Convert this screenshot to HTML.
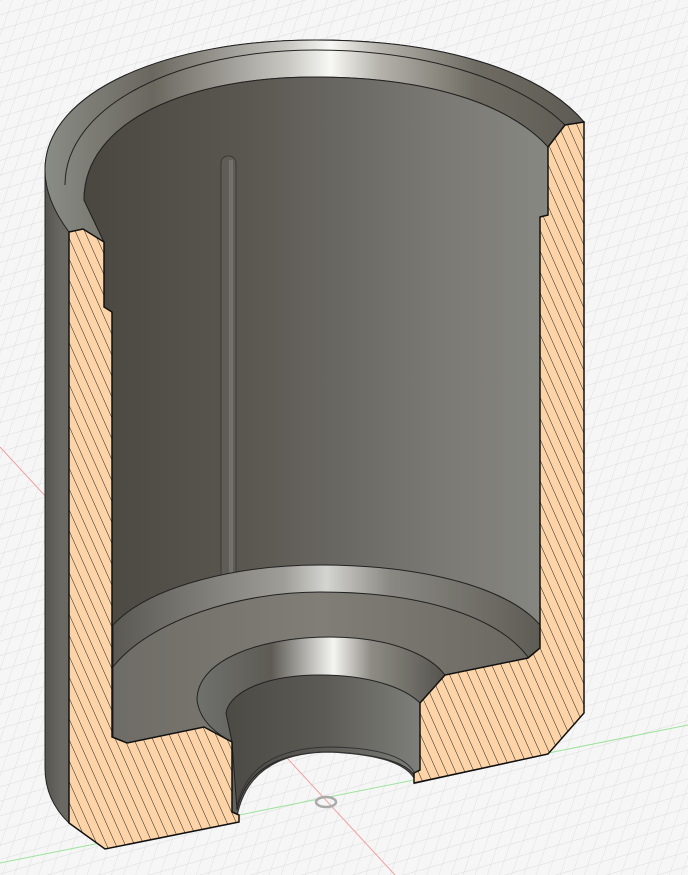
<!DOCTYPE html>
<html><head><meta charset="utf-8"><style>html,body{margin:0;padding:0;background:#f6f6f6}svg{display:block}</style></head>
<body>
<svg width="688" height="875" viewBox="0 0 688 875" xmlns="http://www.w3.org/2000/svg">
<defs>
<pattern id="g1" width="14" height="14" patternUnits="userSpaceOnUse" patternTransform="rotate(-16) skewX(-35)">
<path d="M0 0H14M0 0V14" stroke="#dcdcdc" stroke-width="1" fill="none"/>
</pattern>
<pattern id="hatch" width="8.5" height="20" patternUnits="userSpaceOnUse" patternTransform="rotate(-24)">
<rect width="8.5" height="20" fill="#fdd4a8"/>
<path d="M0 0V20" stroke="#222" stroke-width="1"/>
</pattern>
<linearGradient id="wall" x1="0" x2="1" y1="0" y2="0">
<stop offset="0" stop-color="#4a4741"/><stop offset="0.35" stop-color="#5a5751"/><stop offset="0.75" stop-color="#797873"/><stop offset="1" stop-color="#878782"/>
</linearGradient>
<linearGradient id="rim" x1="0" x2="1" y1="0" y2="0">
<stop offset="0" stop-color="#8a8c86"/><stop offset="0.2" stop-color="#6a675f"/><stop offset="0.45" stop-color="#c8c7c2"/><stop offset="0.53" stop-color="#f8f8f4"/><stop offset="0.62" stop-color="#b5b3ac"/><stop offset="0.8" stop-color="#6e6b62"/><stop offset="1" stop-color="#5e5b54"/>
</linearGradient>
<linearGradient id="outer" x1="0" x2="1" y1="0" y2="0">
<stop offset="0" stop-color="#56544f"/><stop offset="0.03" stop-color="#6a6862"/><stop offset="1" stop-color="#55534e"/>
</linearGradient>
<linearGradient id="floor" x1="0" x2="1" y1="0" y2="0">
<stop offset="0" stop-color="#6e6c66"/><stop offset="0.5" stop-color="#807e76"/><stop offset="1" stop-color="#6a6861"/>
</linearGradient>
<linearGradient id="band" x1="0" x2="1" y1="0" y2="0">
<stop offset="0" stop-color="#5a5852"/><stop offset="0.4" stop-color="#9e9d98"/><stop offset="0.5" stop-color="#d4d4d0"/><stop offset="0.65" stop-color="#8a8882"/><stop offset="1" stop-color="#5e5c55"/>
</linearGradient>
<linearGradient id="cb" x1="0" x2="1" y1="0" y2="0">
<stop offset="0" stop-color="#6f716d"/><stop offset="0.3" stop-color="#5e5b55"/><stop offset="0.55" stop-color="#f5f5f2"/><stop offset="0.7" stop-color="#8e8c85"/><stop offset="1" stop-color="#55534d"/>
</linearGradient>
<linearGradient id="hole" x1="0" x2="1" y1="0" y2="0">
<stop offset="0" stop-color="#4c4a45"/><stop offset="0.5" stop-color="#5c5a55"/><stop offset="1" stop-color="#7e7f7a"/>
</linearGradient>
<clipPath id="hc"><path d="M237,816 Q250,752 330,752 Q400,755 414,778 L414,800 L239,830 Z"/></clipPath>
</defs>
<rect width="688" height="875" fill="#f6f6f6"/>
<rect width="688" height="875" fill="url(#g1)"/>
<g id="axes">
<path d="M0 447 L395 875" stroke="#f0a0a0" stroke-width="1"/>
<path d="M0 863 L688 725" stroke="#9be39b" stroke-width="1"/>
<ellipse cx="326" cy="802" rx="10" ry="5" fill="none" stroke="#aaa" stroke-width="2.5"/>
</g>
<!-- outer body -->
<path d="M45,170 C45,90 170,40 315,40 C440,40 540,70 584,122 L584,713 L548,754 L239,822 L105,849 L69,823 Q45,800 45,768 Z" fill="url(#outer)" stroke="#222" stroke-width="1"/>
<!-- rim -->
<path d="M45,170 C45,90 170,40 315,40 C440,40 540,70 584,122 L565,125 L548,147 C510,105 430,77 315,77 C190,77 84,120 84,200 L104,242 L83,229 L69,232 Q45,200 45,170 Z" fill="url(#rim)" stroke="#222" stroke-width="1"/>
<path d="M65,185 C65,105 180,50 315,50 C435,50 525,85 565,125" fill="none" stroke="#222" stroke-width="1"/>
<!-- bore -->
<path d="M84,200 C84,120 190,77 315,77 C430,77 510,105 548,147 L548,680 L104,680 L104,242 Z" fill="url(#wall)" stroke="#222" stroke-width="1"/>
<!-- rod -->
<rect x="221" y="156" width="15" height="430" rx="7" fill="#5f5d58" stroke="#3a3935" stroke-width="1"/>
<rect x="229" y="160" width="4" height="420" fill="#72716c"/>
<!-- floor band -->
<path d="M113,625 C150,585 240,565 320,565 C430,565 510,590 540,625 L540,680 L113,680 Z" fill="url(#band)" stroke="#222" stroke-width="1"/>
<!-- floor -->
<path d="M113,667 C150,620 240,592 320,592 C430,592 500,620 528,657 L528,658 L445,675 L420,703 L232,742 L204,727 L127,743 L113,737 Z" fill="url(#floor)" stroke="#222" stroke-width="1"/>
<!-- counterbore -->
<path d="M197,700 C197,660 260,637 330,637 C390,637 430,655 445,675 L420,703 L232,742 Q200,725 197,700 Z" fill="url(#cb)" stroke="#222" stroke-width="1"/>
<!-- hole -->
<path d="M226,713 C230,690 270,675 320,675 C370,675 405,688 420,703 L420,770 L414,775 Q400,755 330,752 Q250,752 237,810 L232,742 Z" fill="url(#hole)" stroke="#222" stroke-width="1"/>
<path d="M237,806 Q250,748 330,747 Q400,748 414,772" fill="none" stroke="#333" stroke-width="1"/>
<path d="M237,816 Q250,752 330,752 Q400,755 414,778 L414,800 L239,830 Z" fill="#f6f6f6"/>
<path d="M237,816 Q250,752 330,752 Q400,755 414,778 L414,800 L239,830 Z" fill="url(#g1)"/>
<use href="#axes" clip-path="url(#hc)"/>
<path d="M237,816 Q250,752 330,752 Q400,755 414,778" fill="none" stroke="#333" stroke-width="1.2"/>
<!-- sections -->
<path d="M69,232 L83,229 L104,242 L104,307 L112,312 L112,737 L127,743 L204,727 L232,742 L232,812 L239,815 L239,822 L105,849 L69,823 Z" fill="url(#hatch)" stroke="#111" stroke-width="1.5"/>
<path d="M565,125 L584,122 L584,713 L548,754 L414,783 L414,773 L420,770 L420,703 L445,675 L528,658 L540,648 L540,217 L548,215 L548,147 Z" fill="url(#hatch)" stroke="#111" stroke-width="1.5"/>
</svg>
</body></html>
